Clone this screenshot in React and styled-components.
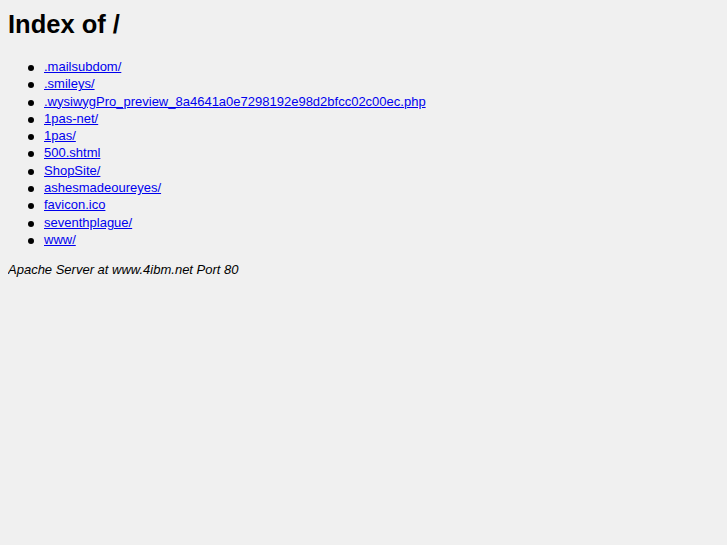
import React from 'react';
import styled, { createGlobalStyle } from 'styled-components';

const GlobalStyle = createGlobalStyle`
  html, body {
    background: #f0f0f0;
  }
  body {
    margin: 8px;
    font-family: "Liberation Sans", Arial, sans-serif;
    color: #000;
  }
`;

const Title = styled.h1`
  font-size: 25.5px;
  font-weight: bold;
  margin: 2px 0 0;
  line-height: 29px;
`;

const List = styled.ul`
  margin: 19px 0 0;
  padding-left: 36px;
  font-size: 13px;
  line-height: 17.3px;
  list-style: none;
`;

const Item = styled.li`
  position: relative;

  &::before {
    content: '';
    position: absolute;
    left: -16px;
    top: 7px;
    width: 6px;
    height: 6px;
    border-radius: 50%;
    background: #000;
  }
`;

const Link = styled.a`
  color: #0000ee;
  text-decoration: underline;
`;

const Footer = styled.address`
  font-size: 13px;
  font-style: italic;
  line-height: 17px;
  margin-top: 13px;
`;

const entries = [
  '.mailsubdom/',
  '.smileys/',
  '.wysiwygPro_preview_8a4641a0e7298192e98d2bfcc02c00ec.php',
  '1pas-net/',
  '1pas/',
  '500.shtml',
  'ShopSite/',
  'ashesmadeoureyes/',
  'favicon.ico',
  'seventhplague/',
  'www/',
];

const App = () => (
  <>
    <GlobalStyle />
    <Title>Index of /</Title>
    <List>
      {entries.map(name => (
        <Item key={name}>
          <Link href={name}>{name}</Link>
        </Item>
      ))}
    </List>
    <Footer>Apache Server at www.4ibm.net Port 80</Footer>
  </>
);

export default App;
